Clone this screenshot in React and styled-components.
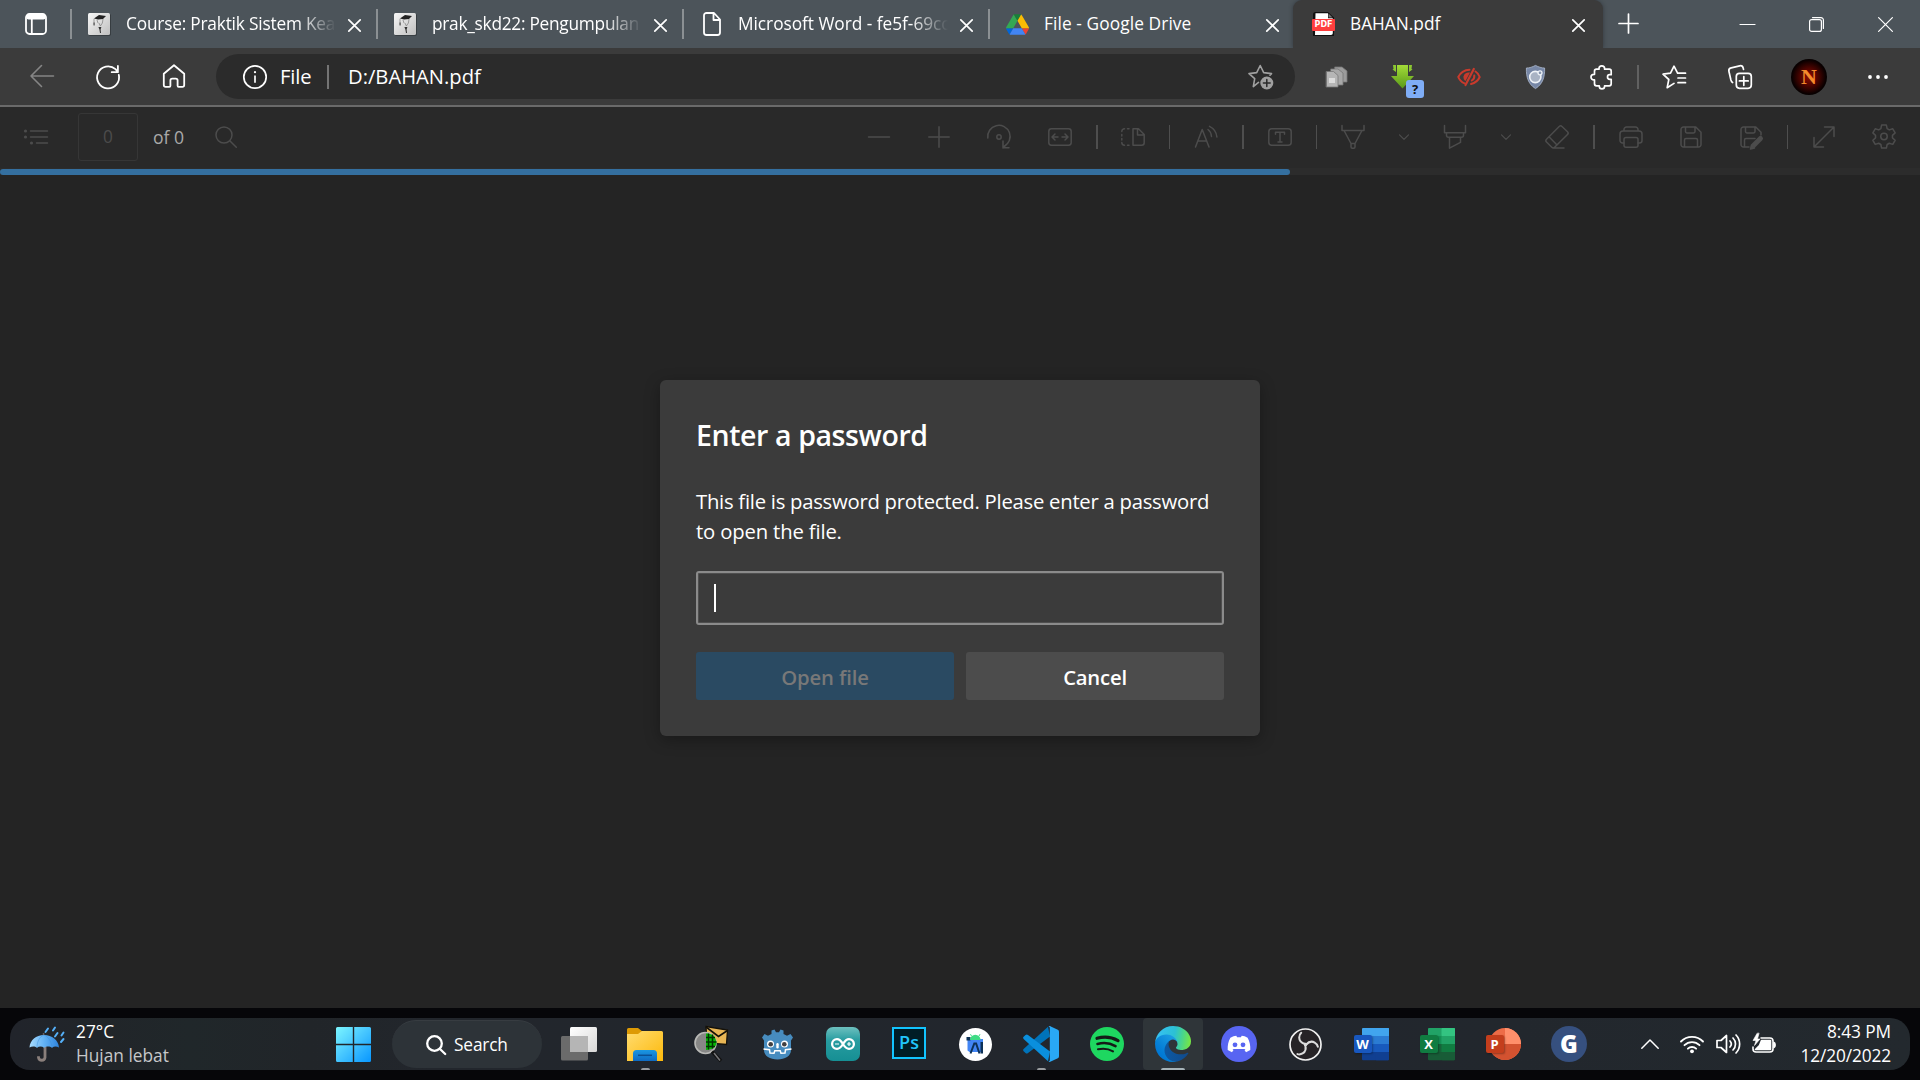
import React from "react";
import styled, { createGlobalStyle } from "styled-components";

const GlobalStyle = createGlobalStyle`
  *, *::before, *::after { box-sizing: border-box; }
  html, body { margin: 0; padding: 0; background: #242424; }
  body { width: 1920px; height: 1080px; overflow: hidden; font-family: "Open Sans", "Noto Sans", sans-serif; color: #fff; }
  button, input { font-family: inherit; border: 0; padding: 0; margin: 0; color: inherit; background: none; }
`;

const Screen = styled.div`
  display: flex;
  flex-direction: column;
  width: 1920px;
  height: 1080px;
  background: #242424;
`;

const Label = styled.span`
  display: block;
  white-space: nowrap;
  font-size: ${(p) => p.$size || 17.3}px;
  font-weight: ${(p) => p.$weight || 400};
  letter-spacing: ${(p) => p.$track || 0}px;
  line-height: ${(p) => p.$line || 24}px;
  color: ${(p) => p.$color || "#fff"};
`;

const Svg = styled.svg`
  display: block;
  flex: none;
  overflow: visible;
`;

const Slot = styled.div`
  display: flex;
  flex: none;
  align-items: center;
  justify-content: center;
  width: ${(p) => p.$w || 60}px;
  height: 100%;
  padding-bottom: ${(p) => p.$lift || 0}px;
  color: ${(p) => p.$color || "inherit"};
`;

const Divider = styled.div`
  flex: none;
  width: ${(p) => p.$w || 2}px;
  height: ${(p) => p.$h || 24}px;
  background: ${(p) => p.$color || "#616161"};
`;

function Icon({ w = 24, h = 24, vb, sw = 1.5, children }) {
  return (
    <Svg
      width={w}
      height={h}
      viewBox={vb || `0 0 ${w} ${h}`}
      fill="none"
      stroke="currentColor"
      strokeWidth={sw}
      strokeLinecap="round"
      strokeLinejoin="round"
    >
      {children}
    </Svg>
  );
}

/* ---------- Tab strip ---------- */

const TabStrip = styled.div`
  display: flex;
  flex: none;
  height: 48px;
  background: #4c545a;
`;

const TabActions = styled.div`
  display: flex;
  align-items: center;
  width: 70px;
  padding-left: 25px;
`;

const Tab = styled.div`
  display: flex;
  flex: none;
  align-items: center;
  width: 306px;
`;

const ActiveTab = styled(Tab)`
  width: 310px;
  margin-left: -1px;
  padding-left: 3px;
  background: #3b3b3b;
  border-radius: 9px 9px 0 0;
  box-shadow: 0 0 4px rgba(20, 24, 28, 0.45);
  clip-path: inset(0 -5px 0 -5px);
`;

const TabIcon = styled.div`
  display: flex;
  justify-content: center;
  width: 23px;
  margin-left: 16px;
`;

const TabTitle = styled.div`
  width: 211px;
  margin-left: 15px;
  padding-bottom: 1px;
  mask-image: ${(p) => (p.$fade ? "linear-gradient(90deg, #000 172px, transparent 210px)" : "none")};
`;

const TabClose = styled.div`
  display: flex;
  margin-left: 11px;
  padding-top: 2px;
`;

const WindowControls = styled.div`
  display: flex;
  margin-left: auto;
`;

function CloseGlyph() {
  return (
    <Icon w={13} h={13} sw={1.7}>
      <path d="M.8.8l11.4 11.4M12.2.8L.8 12.2" />
    </Icon>
  );
}

function MoodleIcon() {
  return (
    <Svg width="23" height="23" viewBox="0 0 23 23">
      <defs>
        <linearGradient id="moodle" x1="0" y1="0" x2="1" y2="1">
          <stop offset="0" stopColor="#f7f7f7" />
          <stop offset="1" stopColor="#bfbfbf" />
        </linearGradient>
      </defs>
      <rect x=".8" y=".8" width="22" height="22" rx="1.5" fill="#33383c" />
      <rect width="22" height="22" rx="1.5" fill="url(#moodle)" />
      <path d="M6 5.500L11 2l7 1-3 3-5 .6z" fill="#222" />
      <path d="M6 5.800v6M9 7l1 3M15 6l-.6 4-2 3-1.500-3" stroke="#888" strokeWidth=".8" fill="none" />
      <path d="M10.400 14h3l-.8 2.500.4 3.500h-1l-.6-3.500z" fill="#333" />
      <path d="M5.500 9.500h1.200v3H5.500z" fill="#555" />
    </Svg>
  );
}

function DocIcon() {
  return (
    <Icon w={18} h={24} sw={1.8}>
      <path d="M3.500 1H11l6 6.500v13a2.500 2.500 0 0 1-2.500 2.500h-11A2.500 2.500 0 0 1 1 20.500v-17A2.500 2.500 0 0 1 3.500 1zM10.500 1.500V8H17" />
    </Icon>
  );
}

function DriveIcon() {
  return (
    <Svg width="23" height="21" viewBox="0 0 87.300 78">
      <path d="M6.600 66.850l3.850 6.650c.8 1.400 1.950 2.500 3.300 3.300l13.750-23.800H0c0 1.550.4 3.100 1.200 4.500z" fill="#0066da" />
      <path d="M43.650 25L29.900 1.200c-1.350.8-2.500 1.900-3.300 3.300L1.200 48.500A9 9 0 0 0 0 53h27.500z" fill="#34a853" />
      <path d="M73.550 76.800c1.350-.8 2.500-1.900 3.300-3.300l1.600-2.750 7.650-13.250c.8-1.400 1.200-2.950 1.200-4.500H59.800l5.850 11.500z" fill="#ea4335" />
      <path d="M43.650 25L57.400 1.200C56.050.4 54.500 0 52.900 0H34.400c-1.600 0-3.150.45-4.500 1.200z" fill="#188038" />
      <path d="M59.800 53H27.500L13.750 76.800c1.350.8 2.900 1.200 4.500 1.200h50.800c1.600 0 3.150-.45 4.500-1.200z" fill="#4285f4" />
      <path d="M73.400 26.500L60.700 4.500c-.8-1.400-1.950-2.500-3.300-3.300L43.650 25 59.800 53h27.450c0-1.550-.4-3.100-1.200-4.500z" fill="#fbbc04" />
    </Svg>
  );
}

const PdfBadge = styled.div`
  display: grid;
  place-items: center;
  position: relative;
  width: 23px;
  height: 24px;

  span {
    position: absolute;
    left: 0;
    top: 7px;
    width: 23px;
    height: 12px;
    background: #ff3e3e;
    border-radius: 1px;
    font: 700 8px/12px "DejaVu Sans", sans-serif;
    text-align: center;
  }
`;

function PdfIcon() {
  return (
    <PdfBadge>
      <Svg width="21" height="24" viewBox="0 0 21 24">
        <path d="M2.500 0H15l6 5.500V24H0V2.500A2.500 2.500 0 0 1 2.500 0z" fill="#111" />
        <path d="M2.500 1.200H15v5h4.800v15a1.800 1.800 0 0 1-1.800 1.800H2z" fill="#fff" />
        <path d="M15.500 1.500l4 4h-4z" fill="#777" />
      </Svg>
      <span>PDF</span>
    </PdfBadge>
  );
}

const tabs = [
  { title: "Course: Praktik Sistem Kea", icon: <MoodleIcon />, fade: true, track: -0.2 },
  { title: "prak_skd22: Pengumpulan", icon: <MoodleIcon />, fade: true, track: -0.26 },
  { title: "Microsoft Word - fe5f-69cc", icon: <DocIcon />, fade: true, track: -0.03 },
  { title: "File - Google Drive", icon: <DriveIcon />, track: 0.1 },
];

function Tabs() {
  return (
    <TabStrip>
      <TabActions>
        <Icon w={22} h={22} sw={1.8}>
          <rect x="1" y="1" width="20" height="20" rx="3.500" />
          <path d="M6.800 6v15" />
          <rect x="1.500" y="1.500" width="19" height="5" rx="2" fill="currentColor" stroke="none" />
        </Icon>
      </TabActions>
      {tabs.map((t) => (
        <Tab key={t.title}>
          <Divider $h={30} $color="#8b9093" />
          <TabIcon>{t.icon}</TabIcon>
          <TabTitle $fade={t.fade}>
            <Label $track={t.track}>{t.title}</Label>
          </TabTitle>
          <TabClose><CloseGlyph /></TabClose>
        </Tab>
      ))}
      <ActiveTab>
        <TabIcon><PdfIcon /></TabIcon>
        <TabTitle><Label $track={0}>BAHAN.pdf</Label></TabTitle>
        <TabClose><CloseGlyph /></TabClose>
      </ActiveTab>
      <Slot $w={50} $lift={1}>
        <Icon w={21} h={21} sw={1.700}><path d="M10.500 1v19M1 10.500h19" /></Icon>
      </Slot>
      <WindowControls>
        <Slot $w={69}><Icon w={15} h={15} sw={1.200}><path d="M0 7.500h15" /></Icon></Slot>
        <Slot $w={69}>
          <Icon w={15} h={15} sw={1.200}>
            <rect x=".6" y="2.600" width="11.800" height="11.800" rx="2" />
            <path d="M3.500.6h8.500a2.400 2.400 0 0 1 2.400 2.400v8.500" />
          </Icon>
        </Slot>
        <Slot $w={69}><Icon w={15} h={15} sw={1.200}><path d="M.6.6l13.800 13.800M14.400.6L.6 14.400" /></Icon></Slot>
      </WindowControls>
    </TabStrip>
  );
}

/* ---------- Navigation bar ---------- */

const NavBar = styled.div`
  display: flex;
  flex: none;
  align-items: center;
  height: 59px;
  padding: 0 9px;
  background: #3b3b3b;
  border-bottom: 2px solid #6a6a6a;
`;

const AddressBar = styled.div`
  display: flex;
  align-items: center;
  width: 1079px;
  height: 45px;
  margin: 0 9px;
  padding: 0 21px 0 27px;
  background: #2b2b2b;
  border-radius: 23px;
`;

const AddressScheme = styled.div`
  width: 47px;
  margin-left: 13px;
  padding-bottom: 1px;
`;

const AddressText = styled.div`
  flex: 1;
  margin-left: 19px;
  padding-bottom: 1px;
`;

const DownloadSlot = styled.div`
  position: relative;
  width: 24px;
  height: 24px;
`;

const CountBadge = styled.span`
  position: absolute;
  left: 15px;
  top: 15px;
  width: 18px;
  height: 18px;
  border-radius: 3px;
  background: #7fadf6;
  color: #111;
  font: 700 13px/19px "Open Sans", sans-serif;
  text-align: center;
`;

const Avatar = styled.div`
  display: grid;
  place-items: center;
  width: 36px;
  height: 36px;
  border-radius: 50%;
  background: radial-gradient(circle, #8d0a00 0%, #4d0400 35%, #0c0000 65%, #000 75%);
  color: #f58a2c;
  font: 700 22px/36px "Liberation Serif", serif;
`;

function Navigation() {
  return (
    <NavBar>
      <Slot $w={66} $color="#858585" $lift={1}>
        <Icon sw={1.600}><path d="M11.500 1.500L1 12l10.500 10.500M1 12h22.500" /></Icon>
      </Slot>
      <Slot $w={66}>
        <Icon sw={1.800}><path d="M22.800 9.800A11 11 0 1 1 19.500 4.200L21.800 6.800M21.900 1v6.200h-6.200" /></Icon>
      </Slot>
      <Slot $w={66} $lift={1}>
        <Icon sw={1.800}>
          <path d="M1.800 9.800L12 1.200l10.200 8.600v11.200a1.800 1.800 0 0 1-1.800 1.800h-3.800a1 1 0 0 1-1-1v-5.300a1.800 1.800 0 0 0-1.800-1.800h-3.600a1.800 1.800 0 0 0-1.800 1.800v5.300a1 1 0 0 1-1 1H3.600a1.800 1.800 0 0 1-1.800-1.800z" />
        </Icon>
      </Slot>
      <AddressBar>
        <Icon sw={1.700}>
          <circle cx="12" cy="12" r="11.200" />
          <path d="M12 10.500v7.300" strokeLinecap="butt" />
          <circle cx="12" cy="7.200" r="1.100" fill="currentColor" stroke="none" />
        </Icon>
        <AddressScheme><Label $size={20.200} $track={-0.100}>File</Label></AddressScheme>
        <Divider $color="#747474" />
        <AddressText><Label $size={20.200}>D:/BAHAN.pdf</Label></AddressText>
        <Slot $w={26} $color="#a0a0a0">
          <Icon w={26} h={26} sw={1.600}>
            <path d="M10.500 18.400L5.300 22.600l1.400-8L1 9.600l7.700-1L12.200 1.500l3.500 7.100 7.800 1-1.500 1.600" />
            <circle cx="18.800" cy="19" r="6.500" fill="#a0a0a0" stroke="none" />
            <path d="M18.800 15.600v6.800M15.400 19h6.800" stroke="#2b2b2b" strokeWidth="1.500" />
          </Icon>
        </Slot>
      </AddressBar>
      <Slot $w={66}>
        <Icon w={22} h={22} sw={0.800}>
          <g stroke="#777">
            <path d="M9 1h7l5 4v11H9z" fill="#9c9c9c" />
            <path d="M5 3h7l5 4v12H5z" fill="#a8a8a8" />
            <path d="M.5 5.500h7l4.500 4V21H.5z" fill="#b6b6b6" />
            <path d="M3 12h6v5H3z" fill="#dcdcdc" stroke="none" />
          </g>
        </Icon>
      </Slot>
      <Slot $w={66}>
        <DownloadSlot>
          <Svg width="24" height="24" viewBox="0 0 24 24">
            <defs>
              <linearGradient id="down" x1="0" y1="0" x2="0" y2="1">
                <stop offset="0" stopColor="#a3dc38" />
                <stop offset="1" stopColor="#5a9a1a" />
              </linearGradient>
            </defs>
            <path d="M6 0h11v11h6L11.500 23.500 0 11h6z" fill="url(#down)" />
            <path d="M2 0h3v7L1.500 4.500l1-.5zM18 0h3l-.5 4 1 .5L18 7z" fill="#8cc832" />
          </Svg>
          <CountBadge>?</CountBadge>
        </DownloadSlot>
      </Slot>
      <Slot $w={66}>
        <Svg width="24" height="18" viewBox="0 0 24 18" fill="none" stroke="#c93a2c" strokeWidth="2" strokeLinecap="round">
          <path d="M7.500 15.300C4.500 14 2 11 1.300 9 3 5 7.500 1.800 12.500 1.800M18.500 3.500c2 1.200 3.500 3.500 4.200 5.500-1.500 3.500-4.500 6-8.700 7" />
          <path d="M16.800 1L8.500 17" strokeWidth="2.200" />
          <path d="M6.500 8.500C7 5.500 10 4 13 4.500L8.500 13C7 12 6.300 10.500 6.500 8.500z" fill="#c93a2c" stroke="none" />
          <path d="M17.300 7.500c.3 2.500-.8 4-2.500 5" />
        </Svg>
      </Slot>
      <Slot $w={66}>
        <Svg width="19" height="24" viewBox="0 0 19 24">
          <path d="M9.500.4C12.500 2 15.500 3 18.600 3c.3 9-1.800 16-9.100 20.600C2.200 19 .1 12 .4 3 3.500 3 6.500 2 9.500.4z" fill="#7787a6" stroke="#aebbd0" strokeWidth=".8" />
          <circle cx="9.300" cy="12" r="5.600" fill="#a9b3c4" stroke="#eef2f7" strokeWidth="1.600" />
          <circle cx="14" cy="7.800" r="2" fill="#8794ae" stroke="#eef2f7" strokeWidth="1.300" />
        </Svg>
      </Slot>
      <Slot $w={66}>
        <Icon w={22} h={24} sw={1.700}>
          <path d="M6.500 4.200H9V3.600a2.800 2.800 0 0 1 5.600 0v.6h4.600a2 2 0 0 1 2 2v3.500h-1.400a2.300 2.300 0 0 0 0 4.600h1.400v4.500a2 2 0 0 1-2 2h-4.600v.4a2.600 2.600 0 0 1-5.300 0v-.4H6.500a2 2 0 0 1-2-2v-3.900h-.7a2.800 2.800 0 0 1 0-5.600h.7V6.200a2 2 0 0 1 2-2z" />
        </Icon>
      </Slot>
      <Slot $w={8}><Divider /></Slot>
      <Slot $w={64}>
        <Icon sw={1.700}>
          <path d="M12 18.400l-6.800 4.300 1.600-8.200L1 9.200l7.500-1.100L12 1.200l3.600 6.900M15.600 8.200H23.500M16 13h7.500M16 17.700h7.500" />
        </Icon>
      </Slot>
      <Slot $w={67}>
        <Icon sw={1.700}>
          <rect x="8.300" y="8.300" width="15" height="15" rx="3.200" />
          <path d="M15.800 11.500v8.800M11.400 15.900h8.800M4.600 17.500C3.500 17 3.200 16 2.900 15L.9 6.300a3 3 0 0 1 2.300-3.500l8.500-2a3 3 0 0 1 3.500 2.300l.3 1.300" />
        </Icon>
      </Slot>
      <Slot $w={72}><Avatar>N</Avatar></Slot>
      <Slot $w={66}>
        <Svg width="20" height="4" viewBox="0 0 20 4" fill="#fff">
          <circle cx="2" cy="2" r="1.900" /><circle cx="10" cy="2" r="1.900" /><circle cx="18" cy="2" r="1.900" />
        </Svg>
      </Slot>
    </NavBar>
  );
}

/* ---------- PDF viewer ---------- */

const PdfToolbar = styled.div`
  display: flex;
  flex: none;
  align-items: center;
  height: 61px;
  padding: 0 6px 1px 24px;
  background: #292929;
  color: #4c4c4c;
`;

const PageField = styled.div`
  display: flex;
  align-items: center;
  justify-content: center;
  width: 60px;
  height: 48px;
  margin: 0 15px 0 30px;
  border: 1px solid #363636;
  border-radius: 3px;
`;

const PageTotal = styled.div`
  width: 62px;
`;

const ToolGroup = styled.div`
  display: flex;
  align-items: center;
  height: 100%;
  margin-left: auto;
`;

const ToolDivider = ({ w = 13.5, line = 1.5 }) => (
  <Slot $w={w}><Divider $w={line} $color="#4e4e4e" /></Slot>
);

const Progress = styled.div`
  flex: none;
  height: 7px;
  padding-top: 1px;
  background: #2c2c2c;
`;

const ProgressFill = styled.div`
  width: 1290px;
  height: 6px;
  border-radius: 3px;
  background: #346f9f;
`;

const Viewer = styled.main`
  display: flex;
  flex: 1;
  flex-direction: column;
  align-items: center;
  padding-top: 205px;
  background: #242424;
`;

const Chevron = () => (
  <Icon w={10} h={6} sw={1.200}><path d="M.5.8L5 5.300 9.500.8" /></Icon>
);

function PdfBar() {
  return (
    <PdfToolbar>
      <Slot $w={24} $lift={1}>
        <Icon w={24} h={16} sw={1.500}>
          <path d="M6.500 2H23.500M6.500 8h17M12.500 14h11" />
          <g fill="currentColor" stroke="none"><circle cx="1.500" cy="2" r="1.600" /><circle cx="1.500" cy="8" r="1.600" /><circle cx="7.500" cy="14" r="1.600" /></g>
        </Icon>
      </Slot>
      <PageField><Label $color="#4c4c4c">0</Label></PageField>
      <PageTotal><Label $color="#a9a9a9" $size={17.600}>of 0</Label></PageTotal>
      <Icon w={22} h={22} sw={1.500}><circle cx="9" cy="9" r="8" /><path d="M15 15l6.300 6.300" /></Icon>
      <ToolGroup>
        <Slot><Icon w={22} h={22}><path d="M.5 11h21" /></Icon></Slot>
        <Slot><Icon w={22} h={22}><path d="M.8 11h20.400M11 .8v20.400" /></Icon></Slot>
        <Slot>
          <Icon w={24} h={24}>
            <path d="M.8 13A11.200 11.200 0 1 1 17 21.500M16 16v6.800h6M19.500 19.500L16 23" />
            <circle cx="12" cy="12" r="2.200" />
          </Icon>
        </Slot>
        <Slot $w={62}>
          <Icon w={24} h={18}>
            <rect x=".8" y=".8" width="22.400" height="16.400" rx="2.600" />
            <path d="M10 9H4.500M7 6L4 9l3 3M14 9h5.500M17 6l3 3-3 3" />
          </Icon>
        </Slot>
        <ToolDivider w={12} line={2} />
        <Slot>
          <Icon w={24} h={18}>
            <path d="M12 .8h5.500L23.200 6.500v8.200a2.500 2.500 0 0 1-2.500 2.500H12zM16.500 1v6h6.200" />
            <path d="M8 .8H6.500M3.500.8A2.700 2.700 0 0 0 .8 3.500M.8 6.500v1.500M.8 10.500V12M.8 14.500a2.700 2.700 0 0 0 2.700 2.700M6.500 17.200H8" />
          </Icon>
        </Slot>
        <ToolDivider />
        <Slot>
          <Icon w={24} h={22}>
            <path d="M1.500 21L8.200 3.500 15 21M3.800 15h8.800M14 3.500c2 1.500 3.300 4 3.500 7M15.500.3c4.500 2.200 7 6 7.400 10.700" />
          </Icon>
        </Slot>
        <ToolDivider />
        <Slot>
          <Icon w={24} h={18}>
            <rect x=".8" y=".8" width="22.400" height="16.400" rx="3" />
            <path d="M7.500 6.300V4.200h9v2.100M12 4.200v9.800M10 14h4" />
          </Icon>
        </Slot>
        <ToolDivider />
        <Slot>
          <Icon w={24} h={24}>
            <path d="M1 .5v5h22v-5M3 5.500l7 13h4l7-13M10 18.500V22a1.200 1.200 0 0 0 1.200 1.200h1.600A1.200 1.200 0 0 0 14 22v-3.500" />
          </Icon>
        </Slot>
        <Slot $w={42}><Chevron /></Slot>
        <Slot>
          <Icon w={24} h={24}>
            <path d="M1.500.5v7.300h21V.5M3.500 7.800v2.400a2 2 0 0 0 2 2h13a2 2 0 0 0 2-2V7.800M6.500 12.200v11l11-5.800v-5.200" />
          </Icon>
        </Slot>
        <Slot $w={42}><Chevron /></Slot>
        <Slot>
          <Icon w={24} h={24}>
            <path d="M14.200 1.500L1.500 14.200a2 2 0 0 0 0 2.800l5.300 5.300a2 2 0 0 0 2.800 0L22.500 9.500a2 2 0 0 0 0-2.800L17 1.500a2 2 0 0 0-2.800 0zM4 11.800L12 20M8 23h11" />
          </Icon>
        </Slot>
        <ToolDivider />
        <Slot>
          <Icon w={24} h={22}>
            <path d="M5 5V3.500A2.500 2.500 0 0 1 7.500 1h9A2.500 2.500 0 0 1 19 3.500V5M5 17H3.500A2.500 2.500 0 0 1 1 14.500V8a3 3 0 0 1 3-3h16a3 3 0 0 1 3 3v6.500a2.500 2.500 0 0 1-2.500 2.500H19" />
            <rect x="5" y="11.500" width="14" height="9.700" rx="2" />
          </Icon>
        </Slot>
        <Slot>
          <Icon w={22} h={22}>
            <path d="M3.500 1h12.300L21 6.200v12.300a2.500 2.500 0 0 1-2.500 2.500h-15A2.500 2.500 0 0 1 1 18.500v-15A2.500 2.500 0 0 1 3.500 1zM5.500 1v4.500A1.500 1.500 0 0 0 7 7h6.500A1.500 1.500 0 0 0 15 5.500V1M4.500 21v-7A1.500 1.500 0 0 1 6 12.500h10a1.500 1.500 0 0 1 1.500 1.500v7" />
          </Icon>
        </Slot>
        <Slot>
          <Icon w={22} h={22}>
            <path d="M9 21H3.500A2.500 2.500 0 0 1 1 18.500v-15A2.500 2.500 0 0 1 3.500 1h12.300L21 6.200V9M5.500 1v4.500A1.500 1.500 0 0 0 7 7h6.500A1.500 1.500 0 0 0 15 5.500V1M4.500 21v-7A1.500 1.500 0 0 1 6 12.500h9" />
            <path d="M13.500 19.500l7-7" strokeWidth="5" />
            <path d="M10.500 23l1-4 3 3z" fill="currentColor" />
          </Icon>
        </Slot>
        <ToolDivider />
        <Slot>
          <Icon w={22} h={22}>
            <path d="M1 21L21 1M11.500 1H21v9.500M1 11.500V21h9.500" />
          </Icon>
        </Slot>
        <Slot $lift={1}>
          <Icon w={26} h={26} vb="0 0 24 24" sw={1.400}>
            <path d="M9.800 1h4.400l.7 3.300 2 1.150 3.200-1.050 2.200 3.800-2.500 2.250v2.300l2.500 2.250-2.200 3.800-3.200-1.050-2 1.150-.7 3.300H9.800l-.7-3.300-2-1.150-3.200 1.050-2.200-3.800 2.500-2.250v-2.300L1.700 8.200l2.200-3.800 3.200 1.050 2-1.150z" />
            <circle cx="12" cy="11.600" r="3" />
          </Icon>
        </Slot>
      </ToolGroup>
    </PdfToolbar>
  );
}

/* ---------- Password dialog ---------- */

const Dialog = styled.section`
  display: flex;
  flex-direction: column;
  width: 600px;
  height: 356px;
  padding: 36px;
  background: #3b3b3b;
  border-radius: 6px;
  box-shadow: 0 4px 16px rgba(0, 0, 0, 0.300);
`;

const DialogTitle = styled.div`
  height: 70px;
`;

const DialogText = styled.div`
  height: 85px;
`;

const PasswordField = styled.div`
  display: flex;
  align-items: center;
  height: 54px;
  padding-left: 16px;
  border: 2px solid #8b8b8b;
  border-radius: 3px;
  box-shadow: inset 0 0 0 1px rgba(139, 139, 139, 0.25);
`;

const Caret = styled.div`
  width: 2px;
  height: 28px;
  background: #fff;
`;

const DialogActions = styled.div`
  display: grid;
  grid-template-columns: 1fr 1fr;
  gap: 12px;
  margin-top: 27px;
`;

const DialogButton = styled.button`
  display: flex;
  align-items: center;
  justify-content: center;
  height: 48px;
  padding-top: 2px;
  border-radius: 3px;
  background: ${(p) => (p.$primary ? "#2a4a62" : "#4c4c4c")};
`;

function PasswordDialog() {
  return (
    <Dialog>
      <DialogTitle><Label $size={28.500} $weight={600} $line={38} $track={-0.400}>Enter a password</Label></DialogTitle>
      <DialogText>
        <Label $size={20.300} $line={30} $track={-0.260}>This file is password protected. Please enter a password</Label>
        <Label $size={20.300} $line={30} $track={-0.160}>to open the file.</Label>
      </DialogText>
      <PasswordField><Caret /></PasswordField>
      <DialogActions>
        <DialogButton $primary><Label $size={20.300} $weight={600} $color="#787878" $track={-0.150}>Open file</Label></DialogButton>
        <DialogButton><Label $size={20.300} $weight={600} $track={-0.200}>Cancel</Label></DialogButton>
      </DialogActions>
    </Dialog>
  );
}

/* ---------- Taskbar ---------- */

const TaskbarArea = styled.footer`
  display: flex;
  flex: none;
  height: 72px;
  padding: 10px;
  background: #060609;
`;

const Taskbar = styled.div`
  display: flex;
  align-items: center;
  width: 1900px;
  height: 52px;
  border-radius: 20px;
  background: linear-gradient(90deg, #21242b 0, #212529 90px, #20272a 180px, #212529 300px, #22262c 420px, #22262d 1200px, #22272d 1500px, #23292e 100%);
`;

const Weather = styled.div`
  display: flex;
  align-items: center;
  width: 310px;
  padding-left: 19px;
  gap: 11px;
`;

const Stack = styled.div`
  display: flex;
  flex-direction: column;
  align-items: ${(p) => p.$align || "flex-start"};
`;

const SearchPill = styled.div`
  display: flex;
  align-items: center;
  width: 150px;
  height: 48px;
  margin: 0 4px 0 6px;
  padding-left: 34px;
  gap: 8px;
  border-radius: 24px;
  background: #2d3338;
  border-top: 1px solid #373c41;
`;

const AppSlot = styled.div`
  display: flex;
  flex: none;
  flex-direction: column;
  align-items: center;
  width: ${(p) => (p.$active ? 60 : 66)}px;
  height: 52px;
  margin: 0 ${(p) => (p.$active ? 3 : 0)}px;
  border-radius: 4px;
  background: ${(p) => (p.$active ? "#2f3539" : "transparent")};
`;

const AppIcon = styled.div`
  display: flex;
  flex: none;
  align-items: center;
  justify-content: center;
  height: 50px;
  padding-top: 2px;
`;

const RunMark = styled.div`
  width: ${(p) => p.$w}px;
  height: 2px;
  border-radius: 2px 2px 0 0;
  background: ${(p) => (p.$w > 10 ? "#a6b3b8" : "#9a9da0")};
`;

const Tray = styled.div`
  display: flex;
  align-items: center;
  height: 100%;
  margin-left: auto;
  padding-right: 19px;
`;

const Clock = styled(Stack)`
  width: 100px;
  margin-left: 6px;
`;

const PsTile = styled.div`
  width: 34px;
  height: 32px;
  border: 2px solid #12c4ff;
  background: #001d26;
  color: #20c5fb;
  text-align: center;
  font: 600 18px/27px "Open Sans", sans-serif;
  margin-bottom: 2px;
`;

const OfficeIcon = styled.div`
  position: relative;
  width: 35px;
  height: 32px;

  svg { position: absolute; left: 0; top: 0; }

  span {
    position: absolute;
    left: 0;
    top: 7px;
    width: 18px;
    height: 18px;
    border-radius: 2px;
    background: ${(p) => p.$tile};
    box-shadow: 1px 1px 2px rgba(0, 0, 0, 0.300);
    font: 700 13px/18px "Open Sans", sans-serif;
    text-align: center;
  }
`;

const GCircle = styled.div`
  width: 36px;
  height: 36px;
  border-radius: 50%;
  background: #36507f;
  font: 800 24px/35px "Open Sans", sans-serif;
  text-align: center;
`;

const UmbrellaIcon = () => (
  <Svg width="36" height="36" viewBox="0 0 36 36">
    <defs>
      <linearGradient id="umb" x1="0" y1="0" x2="1" y2="0">
        <stop offset="0" stopColor="#a8dcff" /><stop offset=".5" stopColor="#62b1f4" /><stop offset="1" stopColor="#2d83dc" />
      </linearGradient>
    </defs>
    <path d="M16 18v13.500a3.300 3.300 0 0 1-6.500 0v-1.300" fill="none" stroke="#8a7f7b" strokeWidth="2.800" />
    <path d="M14.500 7v3" stroke="#6a5f5c" strokeWidth="1.500" />
    <path d="M.5 21.500C1 14 7 9 15 9s14.500 5 15 12.500c-2.500-1.300-5-1.300-7 .3-2-1.600-6-1.600-8 0-2-1.600-5-1.600-7 0-2-1.600-5-1.600-7.500-.3z" fill="url(#umb)" />
    <path d="M8 21.500C8 15 11 10.500 15 9c4 1.500 7.500 6 8 12.500" fill="none" stroke="#3d8fdb" strokeWidth=".8" opacity=".6" />
    <path d="M19 2.500l-2.500 3.500M26 1.500l-2 3M28.500 7l-2.500 3.500M34.500 6.500l-2 3M34.500 13l-2.500 3" stroke="#55b0f8" strokeWidth="2" strokeLinecap="round" />
  </Svg>
);

const StartIcon = () => (
  <Svg width="35" height="35" viewBox="0 0 35 35">
    <defs>
      <linearGradient id="win" x1="0" y1="0" x2="35" y2="35" gradientUnits="userSpaceOnUse">
        <stop offset="0" stopColor="#7cf6ff" /><stop offset=".5" stopColor="#45c5ff" /><stop offset="1" stopColor="#0796ff" />
      </linearGradient>
    </defs>
    <path d="M1.500 0h15.300v16.800H0V1.500A1.500 1.500 0 0 1 1.500 0zM18.200 0h15.300A1.500 1.500 0 0 1 35 1.500v15.300H18.200zM0 18.200h16.800V35H1.500A1.500 1.500 0 0 1 0 33.500zM18.200 18.200H35v15.300a1.500 1.500 0 0 1-1.500 1.500H18.200z" fill="url(#win)" />
  </Svg>
);

const TaskViewIcon = () => (
  <Svg width="36" height="34" viewBox="0 0 36 34">
    <defs>
      <linearGradient id="tv" x1="0" y1="0" x2="1" y2="1"><stop offset="0" stopColor="#fff" /><stop offset="1" stopColor="#d8d8d8" /></linearGradient>
    </defs>
    <rect y="9" width="27" height="24.500" rx="1.500" fill="#6b6b6b" />
    <rect x="9" width="27" height="25" rx="1.500" fill="url(#tv)" />
    <path d="M9 9h18v16H9z" fill="#b5b5b5" />
  </Svg>
);

const FolderIcon = () => (
  <Svg width="36" height="33" viewBox="0 0 36 33">
    <defs>
      <linearGradient id="fold" x1="0" y1="0" x2="1" y2="1"><stop offset="0" stopColor="#ffdc70" /><stop offset="1" stopColor="#fdb90b" /></linearGradient>
      <linearGradient id="foldb" x1="0" y1="0" x2="0" y2="1"><stop offset="0" stopColor="#1a97e2" /><stop offset="1" stopColor="#0f6ac2" /></linearGradient>
    </defs>
    <path d="M0 1.500A1.500 1.500 0 0 1 1.500 0H11l5 4-4 5H0z" fill="#dd9a05" />
    <path d="M0 6h11l4-3h19.500A1.500 1.500 0 0 1 36 4.500V33H0z" fill="url(#fold)" />
    <path d="M6 33v-7.500a3.500 3.500 0 0 1 3.500-3.500h17a3.500 3.500 0 0 1 3.500 3.500V33z" fill="url(#foldb)" />
    <path d="M11 27.300h14" stroke="#0a4f93" strokeWidth="1.500" />
  </Svg>
);

const PacketIcon = () => (
  <Svg width="34" height="36" viewBox="0 0 34 36">
    <path d="M12 .5L33.500 4l-1 14.500L13 17z" fill="#e9b655" stroke="#14110a" strokeWidth="1.300" />
    <path d="M12 1l12.500 9.500L33.500 4.500" fill="none" stroke="#14110a" strokeWidth="1.600" />
    <circle cx="11.500" cy="17" r="10.500" fill="#878786" stroke="#b9b9b6" strokeWidth="1.600" />
    <path d="M12 7.500c6-.5 10 3 10.500 9.500C22 21.500 18 23.500 12 24z" fill="#06b806" />
    <path d="M14.500 7.500v16M18.500 8.500v14M12 11.500h9M12 16h10.500M12 20.500h9" stroke="#003300" strokeWidth="1.500" />
    <path d="M18 25.500L27 35" stroke="#111" strokeWidth="3.500" /><path d="M20 27l6 7.500" stroke="#77777a" strokeWidth="1.500" />
  </Svg>
);

const GodotIcon = () => (
  <Svg width="33" height="32" viewBox="0 0 33 32">
    <path d="M1 9.500l2.500-3.500 3.500 1.800 3.500-1.800L10.500 2.500 13.500 1.500l1.500 2.700h3L19.500 1.500l3 1L22.500 6l3.500 1.800 3.500-1.800L32 9.500 30 12.500v9.500c0 6-6 9.500-13.500 9.500S3 28 3 22v-9.500z" fill="#478cbf" />
    <path d="M2.500 21l6 .7.500 3.300 4 .3.800-2.500h5.400l.8 2.500 4-.3.500-3.300 6-.7" fill="none" stroke="#fff" strokeWidth="1.500" />
    <circle cx="9.500" cy="16" r="3.500" fill="#fff" /><circle cx="9.700" cy="16.200" r="2.300" fill="#414042" />
    <circle cx="23.500" cy="16" r="3.500" fill="#fff" /><circle cx="23.300" cy="16.200" r="2.300" fill="#414042" />
    <rect x="15.300" y="15" width="2.400" height="5.500" rx="1.200" fill="#fff" />
  </Svg>
);

const ArduinoIcon = () => (
  <Svg width="34" height="34" viewBox="0 0 34 34">
    <defs><linearGradient id="ard" x1="0" y1="0" x2="0" y2="1"><stop offset="0" stopColor="#6dc0bf" /><stop offset=".4" stopColor="#279ca0" /><stop offset="1" stopColor="#168f94" /></linearGradient></defs>
    <rect width="34" height="34" rx="7" fill="url(#ard)" />
    <path d="M17 17c-2-3.300-3.800-4.900-6-4.900a4.900 4.900 0 0 0 0 9.800c2.200 0 4-1.600 6-4.900s3.800-4.900 6-4.900a4.900 4.900 0 0 1 0 9.800c-2.200 0-4-1.600-6-4.900z" fill="none" stroke="#fff" strokeWidth="2.300" />
    <path d="M9 17h4M21 17h4M23 15v4" stroke="#fff" strokeWidth="1.200" />
  </Svg>
);

const StudioIcon = () => (
  <Svg width="33" height="33" viewBox="0 0 33 33">
    <circle cx="16.500" cy="16.500" r="16.500" fill="#fff" />
    <path d="M8.500 11h15.500v12l-2 1H10.500l-2-1.500z" fill="#4285f4" />
    <path d="M7.500 9h4v3.500h-4zM21.500 14H24v11.500h-2.500z" fill="#0d3157" />
    <path d="M11 12a5.300 5.300 0 0 1 10.600 0z" fill="#3ddc84" /><path d="M12.500 8l-1-1.800M20 8l1-1.800" stroke="#3ddc84" />
    <path d="M11.500 25.500l3.800-10h1.800l3.400 10" fill="none" stroke="#0d3157" strokeWidth="2" />
  </Svg>
);

const CodeIcon = () => (
  <Svg width="36" height="36" viewBox="0 0 36 36">
    <path d="M27 10.500L5 27a2 2 0 0 1-2.500 0l-1.900-1.800a1.500 1.500 0 0 1 0-2.200L25 .8z" fill="#0073ba" />
    <path d="M27 25.500L5 9a2 2 0 0 0-2.500 0L.6 10.800a1.500 1.500 0 0 0 0 2.200L25 35.200z" fill="#0a8fdd" />
    <path d="M24.800 35.300c1 .7 2 .8 3 .3l7-3.400A2 2 0 0 0 36 30.300V5.700a2 2 0 0 0-1.200-1.900L27.800.4c-1-.5-2-.4-3 .3.800-.5 2 0 2 1.300v32c0 1.300-1.200 1.800-2 1.300z" fill="#29a8f5" />
  </Svg>
);

const SpotifyIcon = () => (
  <Svg width="34" height="34" viewBox="0 0 34 34">
    <circle cx="17" cy="17" r="17" fill="#1ed760" />
    <g fill="none" stroke="#151a17" strokeLinecap="round">
      <path d="M7 11.300c7-2 14.500-1.400 21 2.300" strokeWidth="3.200" />
      <path d="M7.500 17c6-1.700 12.500-1 18 2.100" strokeWidth="2.600" />
      <path d="M8 22.300c5.200-1.200 10.300-.7 15 2" strokeWidth="2.100" />
    </g>
  </Svg>
);

const EdgeIcon = () => (
  <Svg width="36" height="36" viewBox="0 0 256 256">
    <defs>
      <linearGradient id="e1" x1="63" x2="242" y1="177" y2="177" gradientUnits="userSpaceOnUse"><stop offset="0" stopColor="#0c59a4" /><stop offset="1" stopColor="#114a8b" /></linearGradient>
      <linearGradient id="e2" x1="157" x2="46" y1="100" y2="221" gradientUnits="userSpaceOnUse"><stop offset="0" stopColor="#1b9de2" /><stop offset=".2" stopColor="#1595df" /><stop offset=".7" stopColor="#0680d7" /><stop offset="1" stopColor="#0078d4" /></linearGradient>
      <linearGradient id="e3" x1="20" x2="250" y1="60" y2="100" gradientUnits="userSpaceOnUse"><stop offset="0" stopColor="#35c1f1" /><stop offset=".5" stopColor="#2cc0d4" /><stop offset=".75" stopColor="#49d58c" /><stop offset="1" stopColor="#74e548" /></linearGradient>
    </defs>
    <path d="M231 190.500c-3.400 1.800-6.900 3.400-10.500 4.700a101.900 101.900 0 0 1-35.900 6.500c-47.300 0-88.500-32.500-88.500-74.300a31.500 31.500 0 0 1 16.400-27.300c-42.800 1.800-53.800 46.400-53.800 72.500 0 73.900 68.100 81.400 82.800 81.400 7.900 0 19.800-2.300 27-4.600l1.300-.4a128.300 128.300 0 0 0 66.600-52.800 4 4 0 0 0-5.400-5.700z" fill="url(#e1)" />
    <path d="M105.700 241.400a79.200 79.200 0 0 1-22.700-21.300 80.700 80.700 0 0 1 29.500-120c3.200-1.500 8.500-4.100 15.600-4a32.400 32.400 0 0 1 25.700 13 31.900 31.900 0 0 1 6.300 18.700c0-.2 24.500-79.600-80-79.600C36.200 48.200.1 89.900.1 126.400a130.500 130.500 0 0 0 12.100 56 128 128 0 0 0 156.400 67.100 75.600 75.600 0 0 1-62.800-8z" fill="url(#e2)" />
    <path d="M152.300 148.900c-.9 1-3.400 2.500-3.400 5.600 0 2.700 1.700 5.200 4.800 7.300 14.400 10.100 41.700 8.700 41.800 8.700a59.900 59.900 0 0 0 30.400-8.300A61.700 61.700 0 0 0 256 109c.3-22.400-8-37.300-11.300-43.900C223.400 23.400 177.400 0 128 0A128 128 0 0 0 .1 126.200C.5 89.700 36.800 60.200 80.100 60.200c3.500 0 23.500.3 42 10.100 16.300 8.600 24.900 18.900 30.800 29.200 6.200 10.700 7.300 24.100 7.300 29.500s-2.700 13.300-7.900 19.900z" fill="url(#e3)" />
  </Svg>
);

const DiscordIcon = () => (
  <Svg width="36" height="36" viewBox="0 0 36 36">
    <circle cx="18" cy="18" r="18" fill="#5865f2" />
    <path d="M12.500 10.300L15.300 9.700l.8 1.500h3.800l.8-1.500 2.900.6 3 1.400c2 3.600 3 7.800 2.700 12.300l-4.300 2.200-1.500-2.300 1-.8H11.500l1 .8L11 26.200 6.700 24c-.2-4.500.6-8.700 2.700-12.300z" fill="#fff" />
    <circle cx="14" cy="18.800" r="2.400" fill="#5865f2" /><circle cx="22" cy="18.800" r="2.400" fill="#5865f2" />
  </Svg>
);

const ObsIcon = () => (
  <Svg width="33" height="33" viewBox="0 0 33 33">
    <circle cx="16.500" cy="16.500" r="15.500" fill="#262326" stroke="#f0f0f0" strokeWidth="1.700" />
    <g fill="none" stroke="#dcdcdc" strokeWidth="2" strokeLinecap="round">
      {[0, 120, 240].map((a) => (
        <path key={a} transform={`rotate(${a} 16.500 16.500)`} d="M16.500 16c-3.800-.8-6.300-3.200-6.300-6.500 0-2 .8-3.700 2-4.800" />
      ))}
    </g>
    <circle cx="16.500" cy="16.500" r="1.800" fill="#dcdcdc" />
  </Svg>
);

function Office({ letter, tile, bands, round }) {
  return (
    <OfficeIcon $tile={tile}>
      <Svg width="35" height="32" viewBox="0 0 35 32">
        {round ? (
          <>
            <circle cx="19" cy="16" r="16" fill={bands[0]} />
            <path d="M19 0a16 16 0 0 1 16 16H19z" fill={bands[1]} />
            <path d="M3 16h32a16 16 0 0 1-32 0z" fill={bands[2]} />
          </>
        ) : (
          bands.map((b, i) => (
            <React.Fragment key={i}>
              <rect x="8" y={i * 8} width="27" height="8.200" fill={b[0]} rx={i % 3 === 0 ? 1 : 0} />
              <rect x="21.500" y={i * 8} width="13.500" height="8.200" fill={b[1]} rx={i % 3 === 0 ? 1 : 0} />
            </React.Fragment>
          ))
        )}
      </Svg>
      <span>{letter}</span>
    </OfficeIcon>
  );
}

const apps = [
  { icon: <TaskViewIcon /> },
  { icon: <FolderIcon />, mark: 9 },
  { icon: <PacketIcon /> },
  { icon: <GodotIcon /> },
  { icon: <ArduinoIcon /> },
  { icon: <PsTile>Ps</PsTile> },
  { icon: <StudioIcon /> },
  { icon: <CodeIcon />, mark: 9 },
  { icon: <SpotifyIcon /> },
  { icon: <EdgeIcon />, mark: 24, active: true },
  { icon: <DiscordIcon /> },
  { icon: <ObsIcon /> },
  { icon: <Office letter="W" tile="#1857be" bands={[["#41a5ee", "#41a5ee"], ["#2b7cd3", "#2b7cd3"], ["#185abd", "#185abd"], ["#103f91", "#103f91"]]} /> },
  { icon: <Office letter="X" tile="#107c41" bands={[["#21a366", "#33c481"], ["#159256", "#21a366"], ["#17653a", "#107c41"], ["#185c37", "#185c37"]]} /> },
  { icon: <Office letter="P" tile="#c43e1c" bands={["#ed6c47", "#ff8f6b", "#d35230"]} round /> },
  { icon: <GCircle>G</GCircle> },
];

function SystemTray() {
  return (
    <Tray>
      <Slot $w={42}><Icon w={18} h={10} sw={1.500}><path d="M.8 9.200L9 1l8.200 8.200" /></Icon></Slot>
      <Slot $w={42}>
        <Icon w={24} h={18} sw={1.900}>
          <path d="M1 6.500a15.500 15.500 0 0 1 22 0M4.500 10.200a10.600 10.600 0 0 1 15 0M7.900 13.700a5.800 5.800 0 0 1 8.200 0" />
          <circle cx="12" cy="16.300" r="1.900" fill="currentColor" stroke="none" />
        </Icon>
      </Slot>
      <Slot $w={30}>
        <Icon w={24} h={20} sw={1.700}>
          <path d="M1 6.500h4L10.500 1.500v17L5 13.500H1zM14 7a4.500 4.500 0 0 1 0 6M17 4a8.500 8.500 0 0 1 0 12M20 1a13 13 0 0 1 0 18" />
        </Icon>
      </Slot>
      <Slot $w={42} $lift={1}>
        <Icon w={24} h={20} vb="0 1 24 20" sw={1.600}>
          <path d="M9 5h9a3 3 0 0 1 3 3v8a3 3 0 0 1-3 3H4a3 3 0 0 1-3-3v-2" />
          <path d="M9.500 7.500h9v9h-15l4-4z" fill="currentColor" />
          <path d="M22 9.500c1.500.3 1.500 4.700 0 5z" fill="currentColor" />
          <path d="M5 .5L1 7.500h3L2.500 12.500 8 6H5.500L7 .5z" fill="currentColor" strokeWidth=".6" />
        </Icon>
      </Slot>
      <Clock $align="flex-end">
        <Label $size={17.300} $track={-0.100}>8:43 PM</Label>
        <Label $size={17.300} $track={-0.120}>12/20/2022</Label>
      </Clock>
    </Tray>
  );
}

export default function App() {
  return (
    <Screen>
      <GlobalStyle />
      <Tabs />
      <Navigation />
      <PdfBar />
      <Progress><ProgressFill /></Progress>
      <Viewer><PasswordDialog /></Viewer>
      <TaskbarArea>
        <Taskbar>
          <Weather>
            <UmbrellaIcon />
            <Stack>
              <Label $size={17.300}>27°C</Label>
              <Label $size={17.300} $color="#c6c8ca">Hujan lebat</Label>
            </Stack>
          </Weather>
          <AppSlot><AppIcon><StartIcon /></AppIcon></AppSlot>
          <SearchPill>
            <Icon w={20} h={20} sw={2.300}><circle cx="8.500" cy="8.500" r="7.300" /><path d="M14 14l5.200 5" /></Icon>
            <Label $size={17.300} $track={-0.150}>Search</Label>
          </SearchPill>
          {apps.map((a, i) => (
            <AppSlot key={i} $active={a.active}>
              <AppIcon>{a.icon}</AppIcon>
              {a.mark && <RunMark $w={a.mark} />}
            </AppSlot>
          ))}
          <SystemTray />
        </Taskbar>
      </TaskbarArea>
    </Screen>
  );
}
